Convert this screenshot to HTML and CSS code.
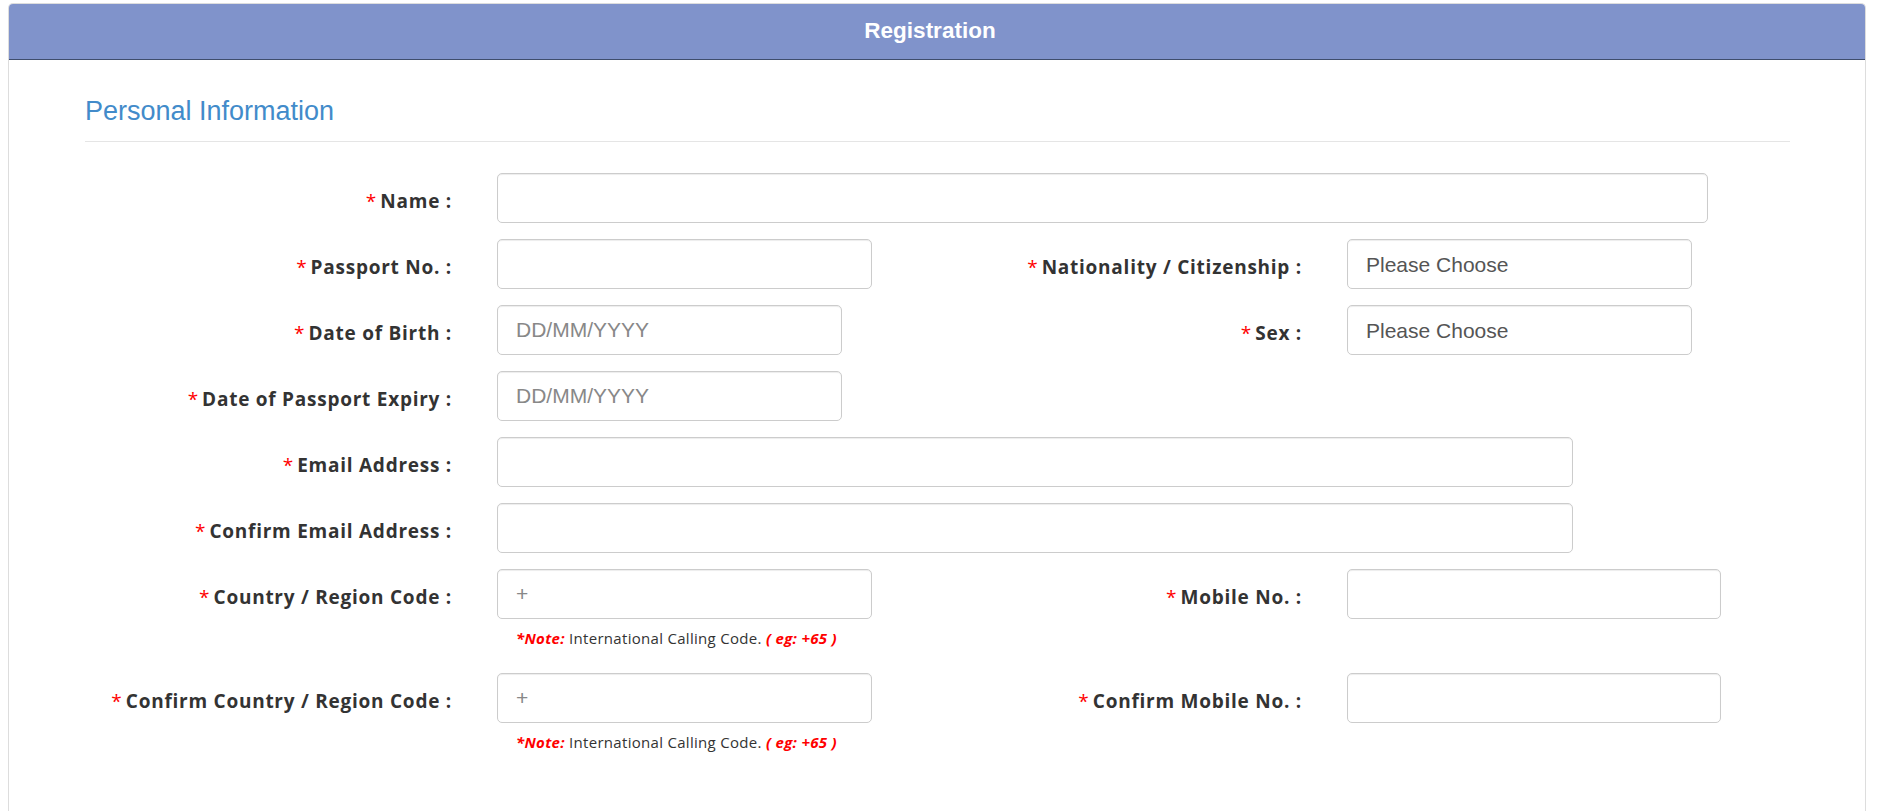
FILE: index.html
```html
<!DOCTYPE html>
<html lang="en">
<head>
<meta charset="utf-8">
<title>Registration</title>
<link rel="stylesheet" href="styles.css">
</head>
<body>
<div class="panel">
  <div class="panel-heading">Registration</div>
  <div class="panel-body">
    <h3 class="section-title">Personal Information</h3>
    <hr class="divider">
    <form class="form">
      <div class="row">
        <label class="label"><span class="req">*</span>Name :</label>
        <div class="cell full"><input class="control w-name" type="text"></div>
      </div>
      <div class="row">
        <label class="label"><span class="req">*</span>Passport No. :</label>
        <div class="cell"><input class="control w-375" type="text"></div>
        <label class="label"><span class="req">*</span>Nationality / Citizenship :</label>
        <div class="cell"><select class="control select w-345"><option>Please Choose</option></select></div>
      </div>
      <div class="row">
        <label class="label"><span class="req">*</span>Date of Birth :</label>
        <div class="cell"><input class="control w-345" type="text" placeholder="DD/MM/YYYY"></div>
        <label class="label"><span class="req">*</span>Sex :</label>
        <div class="cell"><select class="control select w-345"><option>Please Choose</option></select></div>
      </div>
      <div class="row">
        <label class="label"><span class="req">*</span>Date of Passport Expiry :</label>
        <div class="cell"><input class="control w-345" type="text" placeholder="DD/MM/YYYY"></div>
      </div>
      <div class="row">
        <label class="label"><span class="req">*</span>Email Address :</label>
        <div class="cell full"><input class="control w-email" type="text"></div>
      </div>
      <div class="row">
        <label class="label"><span class="req">*</span>Confirm Email Address :</label>
        <div class="cell full"><input class="control w-email" type="text"></div>
      </div>
      <div class="row">
        <label class="label"><span class="req">*</span>Country / Region Code :</label>
        <div class="cell">
          <input class="control w-375" type="text" placeholder="+">
          <p class="note"><em class="red">*Note:</em> International Calling Code. <em class="red">( eg: +65 )</em></p>
        </div>
        <label class="label"><span class="req">*</span>Mobile No. :</label>
        <div class="cell"><input class="control w-373" type="text"></div>
      </div>
      <div class="row">
        <label class="label"><span class="req">*</span>Confirm Country / Region Code :</label>
        <div class="cell">
          <input class="control w-375" type="text" placeholder="+">
          <p class="note"><em class="red">*Note:</em> International Calling Code. <em class="red">( eg: +65 )</em></p>
        </div>
        <label class="label"><span class="req">*</span>Confirm Mobile No. :</label>
        <div class="cell"><input class="control w-373" type="text"></div>
      </div>
    </form>
  </div>
</div>
</body>
</html>
```
FILE: styles.css
```css
* { box-sizing: border-box; }
html, body { margin: 0; padding: 0; background: #fff; }
body {
  font-family: "Liberation Sans", Arial, sans-serif;
  color: #333;
  overflow: hidden;
}
.panel {
  margin: 3px 13px 0 8px;
  border: 1px solid #ddd;
  border-bottom: 0;
  border-radius: 5px 5px 0 0;
  min-height: 900px;
  background: #fff;
}
.panel-heading {
  height: 56px;
  background: #8093cb;
  border-bottom: 1px solid #3f4d6c;
  border-radius: 4px 4px 0 0;
  color: #fff;
  font-weight: bold;
  font-size: 22.5px;
  line-height: 54px;
  text-align: center;
  padding-right: 14px;
}
.panel-body {
  padding: 0 75px 0 76px;
}
.section-title {
  margin: 36px 0 0 0;
  font-size: 27px;
  line-height: 30px;
  font-weight: normal;
  color: #428bca;
}
.divider {
  margin: 15px 0 0 0;
  border: 0;
  border-top: 1px solid #e5e5e5;
  height: 0;
}
.form {
  margin-top: 31px;
}
.row {
  display: grid;
  grid-template-columns: 367px 403px 357px 443px;
  column-gap: 45px;
  margin-bottom: 16px;
}
.label {
  height: 50px;
  padding-top: 5px;
  display: flex;
  align-items: center;
  justify-content: flex-end;
  font-family: "Open Sans", "Noto Sans", sans-serif;
  font-weight: 700;
  font-size: 19px;
  letter-spacing: 0.75px;
  color: #333;
  white-space: nowrap;
}
.req {
  color: #f00;
  font-weight: 400;
  margin-right: 4px;
  letter-spacing: 0;
}
.cell.full { grid-column: 2 / 5; }
.control {
  display: block;
  height: 50px;
  border: 1px solid #ccc;
  border-radius: 5px;
  box-shadow: inset 0 1px 1px rgba(0,0,0,.075);
  padding: 0 18px;
  font-family: "Liberation Sans", Arial, sans-serif;
  font-size: 21px;
  color: #555;
  background: #fff;
  outline: none;
  margin: 0;
}
.control::placeholder { color: #888; }
.select {
  -webkit-appearance: none;
  appearance: none;
  color: #555;
}
.w-name { width: 1211px; }
.w-email { width: 1076px; }
.w-375 { width: 375px; }
.w-373 { width: 374px; }
.w-345 { width: 345px; }
.note {
  margin: 0;
  height: 38px;
  padding-left: 19px;
  display: flex;
  align-items: center;
  font-family: "Open Sans", "Noto Sans", sans-serif;
  font-size: 15px;
  letter-spacing: 0.3px;
  color: #333;
  white-space: pre;
}
.note .red {
  color: #f00;
  font-weight: 700;
  font-style: italic;
}
```
